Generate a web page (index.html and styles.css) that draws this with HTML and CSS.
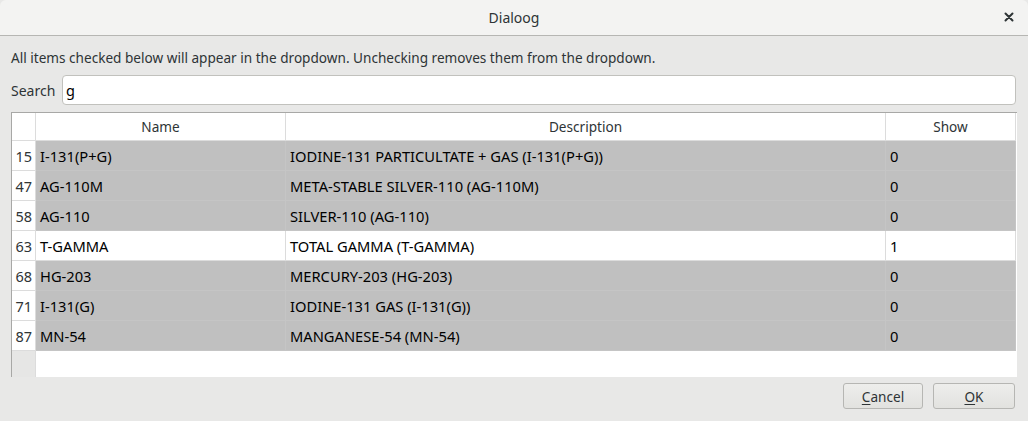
FILE: index.html
```html
<!DOCTYPE html>
<html>
<head>
<meta charset="utf-8">
<link rel="stylesheet" href="styles.css">
</head>
<body>
<div class="dialog">
  <div class="titlebar">
    <span class="title">Dialoog</span>
    <span class="close">
      <svg width="10" height="10" viewBox="0 0 10 10"><path d="M1.5 1.5 L8.5 8.5 M8.5 1.5 L1.5 8.5" stroke="#2e3436" stroke-width="2" stroke-linecap="round"/></svg>
    </span>
  </div>
  <div class="body">
    <div class="info">All items checked below will appear in the dropdown. Unchecking removes them from the dropdown.</div>
    <div class="search">
      <span class="search-label">Search</span>
      <div class="search-input">g</div>
    </div>
    <div class="table">
      <div class="row head">
        <div class="c num"></div>
        <div class="c name center">Name</div>
        <div class="c desc center">Description</div>
        <div class="c show center">Show</div>
      </div>
      <div class="row grey"><div class="c num">15</div><div class="c name">I-131(P+G)</div><div class="c desc">IODINE-131 PARTICULTATE + GAS (I-131(P+G))</div><div class="c show">0</div></div>
      <div class="row grey"><div class="c num">47</div><div class="c name">AG-110M</div><div class="c desc">META-STABLE SILVER-110 (AG-110M)</div><div class="c show">0</div></div>
      <div class="row grey"><div class="c num">58</div><div class="c name">AG-110</div><div class="c desc">SILVER-110 (AG-110)</div><div class="c show">0</div></div>
      <div class="row white"><div class="c num">63</div><div class="c name">T-GAMMA</div><div class="c desc">TOTAL GAMMA (T-GAMMA)</div><div class="c show">1</div></div>
      <div class="row grey"><div class="c num">68</div><div class="c name">HG-203</div><div class="c desc">MERCURY-203 (HG-203)</div><div class="c show">0</div></div>
      <div class="row grey"><div class="c num">71</div><div class="c name">I-131(G)</div><div class="c desc">IODINE-131 GAS (I-131(G))</div><div class="c show">0</div></div>
      <div class="row grey"><div class="c num">87</div><div class="c name">MN-54</div><div class="c desc">MANGANESE-54 (MN-54)</div><div class="c show">0</div></div>
      <div class="row empty"><div class="c num"></div><div class="c rest"></div></div>
    </div>
    <div class="buttons">
      <button class="btn"><u>C</u>ancel</button>
      <button class="btn"><u>O</u>K</button>
    </div>
  </div>
</div>
</body>
</html>
```
FILE: styles.css
```css
* { box-sizing: border-box; }
html, body { margin: 0; padding: 0; }
body {
  width: 1028px;
  height: 421px;
  overflow: hidden;
  font-family: "Noto Sans", "Open Sans", sans-serif;
  font-size: 13.6px;
  color: #2e3436;
  background: #e8e8e7;
}
.dialog { width: 1028px; height: 421px; display: flex; flex-direction: column; }
.titlebar {
  height: 36px;
  background: #f3f3f2;
  border-bottom: 1px solid #b6b6b3;
  border-radius: 6px 6px 0 0;
  display: flex;
  align-items: center;
  justify-content: center;
  position: relative;
}
.title { font-size: 14px; color: #2e3436; }
.close { position: absolute; right: 14px; top: 12px; width: 10px; height: 10px; display: flex; }
.body { flex: 1; display: flex; flex-direction: column; padding: 0 12px 0 11px; }
.info { height: 40px; padding-top: 12px; line-height: 20px; color: #2e3436; }
.search { display: flex; align-items: center; height: 30px; margin-top: -1px; font-size: 14px; }
.search-label { width: 51px; }
.search-input {
  flex: 1;
  height: 30px;
  background: #fff;
  border: 1px solid #c1c1bd;
  border-radius: 4px;
  padding: 0 6px 0 3px;
  line-height: 28px;
  font-size: 14.5px;
  color: #000;
}
.table {
  margin-top: 7px;
  width: 1006px;
  height: 265px;
  background: #fff;
  border-top: 1px solid #a8a8a6;
  border-left: 1px solid #a8a8a6;
  display: flex;
  flex-direction: column;
}
.row { display: flex; height: 30px; }
.row.head { height: 28px; }
.c {
  height: 100%;
  display: flex;
  align-items: center;
  padding-left: 4px;
  white-space: nowrap;
  color: #000;
  font-size: 14.7px;
}
.c.num { width: 24px; justify-content: flex-end; padding: 0 3px 0 0; border-right: 1px solid #dcdcdc; border-bottom: 1px solid #dcdcdc; background: #fff; color: #2e3436; font-size: 14.5px; }
.c.name { width: 250px; }
.c.desc { width: 600px; }
.c.show { width: 130px; }
.c.center { justify-content: center; padding-left: 0; color: #2e3436; font-size: 13.6px; }
.head .c { border-right: 1px solid #dcdcdc; border-bottom: 1px solid #dcdcdc; }
.grey .c:not(.num) { background: #c0c0c0; border-right: 1px solid #c5c5c5; border-bottom: 1px solid #c5c5c5; }
.white .c:not(.num) { background: #fff; border-right: 1px solid #dcdcdc; border-bottom: 1px solid #dcdcdc; }
.row.empty { flex: 1; }
.empty .c.num { background: #e6e6e5; border: none; border-right: 1px solid #dcdcdc; }
.empty .c.rest { flex: 1; background: #fff; }
.buttons { display: flex; justify-content: flex-end; gap: 10px; margin-top: 6px; padding-right: 1px; }
.btn {
  font-family: inherit;
  font-size: 13.6px;
  color: #2e3436;
  width: 80px;
  height: 26px;
  border: 1px solid #b6b6b3;
  border-radius: 3px;
  background: linear-gradient(#eeeeec, #e2e2df);
  padding: 0;
}
.btn:last-child { width: 82px; }
.btn u { text-underline-offset: 2px; }
```
